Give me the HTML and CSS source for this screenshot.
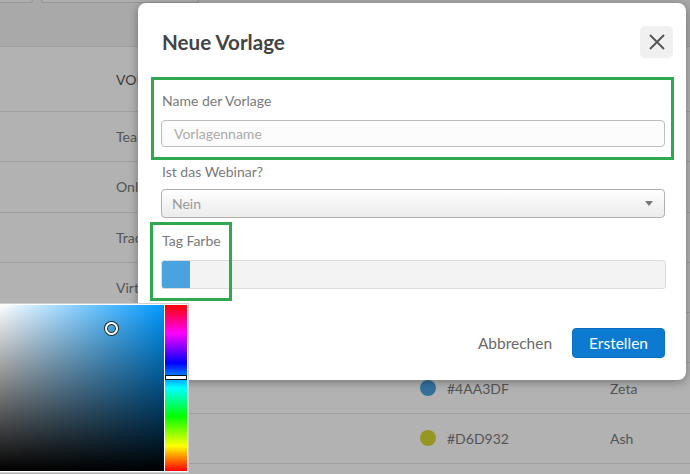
FILE: index.html
```html
<!DOCTYPE html>
<html lang="de">
<head>
<meta charset="utf-8">
<title>Neue Vorlage</title>
<link rel="stylesheet" href="styles.css">
</head>
<body>
<div class="page">
  <div class="topbar">
    <span class="tb-btn tb-a"></span>
    <span class="tb-btn tb-b"></span>
  </div>
  <div class="table">
    <div class="row head">
      <span class="c-name">VORLAGENNAME</span>
      <span class="c-color">FARBE</span>
      <span class="c-owner">ERSTELLT VON</span>
    </div>
    <div class="row"><span class="c-name">Team Meeting</span><span class="c-color"><i class="dot" style="background:#e67e22"></i>#E67E22</span><span class="c-owner">Alpha</span></div>
    <div class="row"><span class="c-name">Online Kurs</span><span class="c-color"><i class="dot" style="background:#9b59b6"></i>#9B59B6</span><span class="c-owner">Beta</span></div>
    <div class="row"><span class="c-name">Tracking</span><span class="c-color"><i class="dot" style="background:#2ecc71"></i>#2ECC71</span><span class="c-owner">Gamma</span></div>
    <div class="row"><span class="c-name">Virtuelles Event</span><span class="c-color"><i class="dot" style="background:#e74c3c"></i>#E74C3C</span><span class="c-owner">Delta</span></div>
    <div class="row"><span class="c-name">Workshop</span><span class="c-color"><i class="dot" style="background:#1abc9c"></i>#1ABC9C</span><span class="c-owner">Epsilon</span></div>
    <div class="row"><span class="c-name">Schulung</span><span class="c-color"><i class="dot" style="background:#4aa3df"></i>#4AA3DF</span><span class="c-owner">Zeta</span></div>
    <div class="row"><span class="c-name">Konferenz</span><span class="c-color"><i class="dot" style="background:#d6d932"></i>#D6D932</span><span class="c-owner">Ash</span></div>
  </div>
  <div class="overlay"></div>
</div>

<div class="modal">
  <div class="modal-head">
    <h2 class="modal-title">Neue Vorlage</h2>
    <button class="close-btn" aria-label="Schließen">
      <svg width="16" height="16" viewBox="0 0 16 16"><path d="M1 1 L15 15 M15 1 L1 15" stroke="#555" stroke-width="1.9" fill="none"/></svg>
    </button>
  </div>
  <div class="modal-body">
    <div class="field f1">
      <label class="lbl">Name der Vorlage</label>
      <div class="input"><span class="ph">Vorlagenname</span></div>
    </div>
    <div class="field f2">
      <label class="lbl">Ist das Webinar?</label>
      <div class="select"><span class="sel-val">Nein</span><span class="caret"></span></div>
    </div>
    <div class="field f3">
      <label class="lbl">Tag Farbe</label>
      <div class="colorfield"><span class="swatch"></span></div>
    </div>
  </div>
  <div class="modal-foot">
    <button class="btn-cancel">Abbrechen</button>
    <button class="btn-primary">Erstellen</button>
  </div>
  <div class="mark mark-a"></div>
  <div class="mark mark-b"></div>
</div>

<div class="picker">
  <div class="sv"><span class="sv-knob"></span></div>
  <div class="hue"><span class="hue-knob"></span></div>
</div>
</body>
</html>
```
FILE: styles.css
```css
* { box-sizing: border-box; }
html, body { margin: 0; padding: 0; }
body {
  width: 690px;
  height: 474px;
  overflow: hidden;
  position: relative;
  font-family: Lato, "Open Sans", sans-serif;
  background: #fff;
}

.page { position: relative; height: 474px; overflow: hidden; }

.topbar {
  height: 46px;
  background: #f2f2f2;
  display: flex;
  align-items: flex-start;
  gap: 8px;
}
.tb-btn {
  height: 3px;
  background: #fafafa;
  border: 1px solid #d8d8d8;
  border-top: none;
  border-radius: 0 0 4px 4px;
}
.tb-a { width: 35px; margin-left: -2px; }
.tb-b { width: 158px; }

.table { border-top: 1px solid #e4e4e4; }
.row {
  display: flex;
  align-items: center;
  height: 50.3px;
  border-bottom: 1px solid #e4e4e4;
  font-size: 14px;
  color: #7a7a7a;
}
.row.head { height: 65px; color: #5a5a5a; }
.c-name { width: 420px; padding-left: 116px; white-space: nowrap; }
.c-color { width: 189px; display: flex; align-items: center; gap: 11px; }
.c-owner { padding-left: 1px; }
.dot { display: inline-block; width: 16px; height: 16px; border-radius: 50%; }

.overlay {
  position: absolute;
  inset: 0;
  background: rgba(0, 0, 0, 0.3);
}

.modal {
  position: absolute;
  left: 138px;
  top: 3px;
  width: 548px;
  background: #fff;
  border-radius: 8px;
  box-shadow: 0 2px 10px rgba(0, 0, 0, 0.35);
}
.modal-head {
  display: flex;
  align-items: center;
  justify-content: space-between;
  padding: 23px 13px 0 24px;
  height: 55px;
}
.modal-title {
  margin: 0;
  font-size: 20.6px;
  line-height: 24px;
  font-weight: 700;
  color: #444;
}
.close-btn {
  width: 33px;
  height: 32px;
  border: none;
  border-radius: 5px;
  background: #f0f0f0;
  display: flex;
  align-items: center;
  justify-content: center;
  padding: 0;
}

.modal-body { padding: 0 21px 0 23px; }
.field { display: flex; flex-direction: column; }
.lbl {
  font-size: 14px;
  line-height: 18px;
  color: #7a7a7a;
  padding-left: 1px;
}
.f1 { margin-top: 34px; }
.f1 .lbl { margin-bottom: 10px; }
.f2 { margin-top: 16px; }
.f2 .lbl { margin-bottom: 8px; }
.f3 { margin-top: 14px; }
.f3 .lbl { margin-bottom: 10px; }

.input {
  height: 27px;
  border: 1px solid #bdbdbd;
  border-radius: 4px;
  background: #fcfcfc;
  display: flex;
  align-items: center;
  padding-left: 12px;
}
.ph { font-size: 14px; color: #aaa; }

.select {
  height: 29px;
  border: 1px solid #b0b0b0;
  border-radius: 4px;
  background: linear-gradient(#ffffff, #f6f6f6 40%, #ececec);
  display: flex;
  align-items: center;
  justify-content: space-between;
  padding: 0 11px 0 10px;
}
.sel-val { font-size: 14px; color: #9a9a9a; }
.caret {
  width: 0;
  height: 0;
  border-left: 4px solid transparent;
  border-right: 4px solid transparent;
  border-top: 5px solid #777;
}

.colorfield {
  height: 29px;
  border: 1px solid #dcdcdc;
  border-radius: 3px;
  background: #f3f3f3;
  padding: 0;
  display: flex;
  width: 505px;
}
.swatch {
  width: 28px;
  height: 100%;
  background: #4aa3df;
  border-radius: 2px 0 0 2px;
}

.modal-foot {
  display: flex;
  justify-content: flex-end;
  align-items: center;
  gap: 20px;
  padding: 39px 21px 22px 0;
}
.btn-cancel {
  border: none;
  background: none;
  padding: 0;
  font-family: inherit;
  font-size: 15.5px;
  color: #6a6a6a;
}
.btn-primary {
  height: 30px;
  padding: 0 16px;
  border: 1px solid #0a6fc0;
  border-radius: 4px;
  background: #0b7ad0;
  color: #fff;
  font-family: inherit;
  font-size: 15.5px;
}

.mark {
  position: absolute;
  border: 3px solid #2fa84f;
  pointer-events: none;
}
.mark-a { left: 13px; top: 74px; width: 523px; height: 83px; }
.mark-b { left: 12px; top: 219px; width: 82px; height: 79px; }

.picker {
  position: absolute;
  left: -3px;
  top: 303px;
  display: flex;
  gap: 1px;
  padding: 1px;
  background: #fff;
  border: 1px solid #cfcfcf;
}
.sv {
  position: relative;
  width: 165px;
  height: 166px;
  background:
    linear-gradient(to top, #000, rgba(0,0,0,0)),
    linear-gradient(to right, #fff, rgba(255,255,255,0)),
    #0099ff;
}
.sv-knob {
  position: absolute;
  left: 106px;
  top: 17px;
  width: 13px;
  height: 13px;
  border-radius: 50%;
  border: 2px solid #fff;
  box-shadow: 0 0 0 1px #222, inset 0 0 0 1px #222;
}
.hue {
  position: relative;
  width: 22px;
  height: 166px;
  background: linear-gradient(to bottom, #f00 0%, #f0f 17%, #00f 35%, #0ff 50%, #0f0 67%, #ff0 85%, #f00 100%);
}
.hue-knob {
  position: absolute;
  left: 0;
  top: 70px;
  width: 22px;
  height: 5px;
  background: #fff;
  border: 1px solid #111;
}
```
